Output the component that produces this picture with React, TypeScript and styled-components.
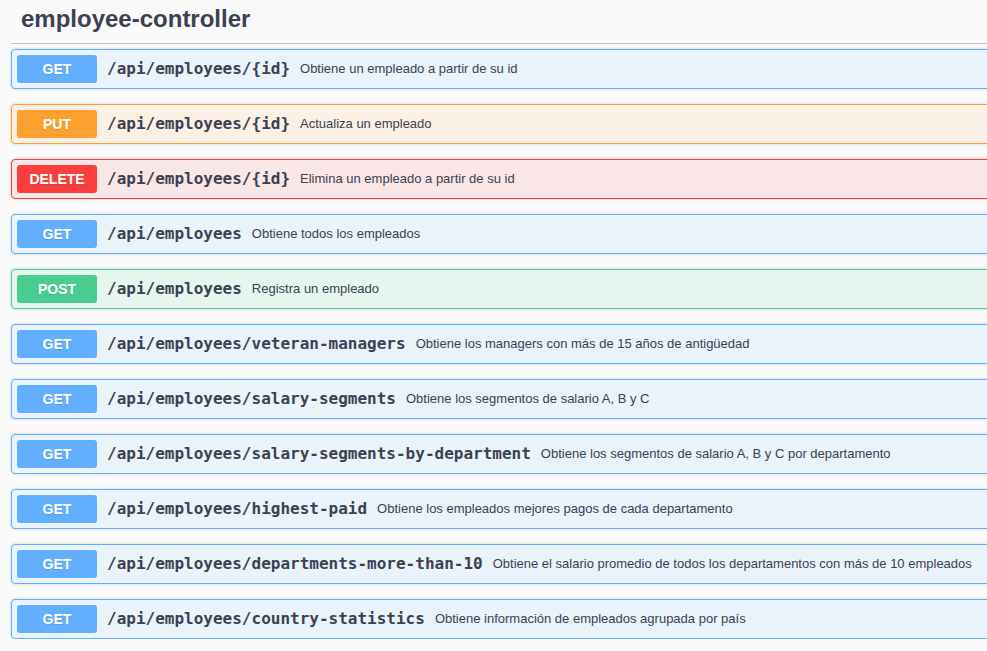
import React from 'react';
import styled, { createGlobalStyle } from 'styled-components';

type Method = 'GET' | 'PUT' | 'DELETE' | 'POST';

const methodColors: Record<Method, { main: string; bg: string }> = {
  GET: { main: '#61affe', bg: 'rgba(97, 175, 254, 0.1)' },
  PUT: { main: '#fca130', bg: 'rgba(252, 161, 48, 0.1)' },
  DELETE: { main: '#f93e3e', bg: 'rgba(249, 62, 62, 0.1)' },
  POST: { main: '#49cc90', bg: 'rgba(73, 204, 144, 0.1)' },
};

const operations: { method: Method; path: string; summary: string }[] = [
  { method: 'GET', path: '/api/employees/{id}', summary: 'Obtiene un empleado a partir de su id' },
  { method: 'PUT', path: '/api/employees/{id}', summary: 'Actualiza un empleado' },
  { method: 'DELETE', path: '/api/employees/{id}', summary: 'Elimina un empleado a partir de su id' },
  { method: 'GET', path: '/api/employees', summary: 'Obtiene todos los empleados' },
  { method: 'POST', path: '/api/employees', summary: 'Registra un empleado' },
  {
    method: 'GET',
    path: '/api/employees/veteran-managers',
    summary: 'Obtiene los managers con más de 15 años de antigüedad',
  },
  {
    method: 'GET',
    path: '/api/employees/salary-segments',
    summary: 'Obtiene los segmentos de salario A, B y C',
  },
  {
    method: 'GET',
    path: '/api/employees/salary-segments-by-department',
    summary: 'Obtiene los segmentos de salario A, B y C por departamento',
  },
  {
    method: 'GET',
    path: '/api/employees/highest-paid',
    summary: 'Obtiene los empleados mejores pagos de cada departamento',
  },
  {
    method: 'GET',
    path: '/api/employees/departments-more-than-10',
    summary: 'Obtiene el salario promedio de todos los departamentos con más de 10 empleados',
  },
  {
    method: 'GET',
    path: '/api/employees/country-statistics',
    summary: 'Obtiene información de empleados agrupada por país',
  },
];

const App = () => {
  return (
    <>
      <GlobalStyle />
      <Page>
        <TagHeading>employee-controller</TagHeading>
        <OpList>
          {operations.map((op, i) => (
            <OpBlock key={i} method={op.method}>
              <MethodBadge method={op.method}>{op.method}</MethodBadge>
              <OpPath>{op.path}</OpPath>
              <OpSummary>{op.summary}</OpSummary>
            </OpBlock>
          ))}
        </OpList>
      </Page>
    </>
  );
};

export default App;

const GlobalStyle = createGlobalStyle`
  html, body {
    margin: 0;
    padding: 0;
    background: #fafafa;
    overflow: hidden;
  }
  body {
    font-family: 'Liberation Sans', Arial, sans-serif;
    color: #3b4151;
  }
`;

const Page = styled.div`
  width: 1020px;
  padding-left: 11px;
`;

const TagHeading = styled.h3`
  margin: 0 0 5px;
  padding: 5px 0 10px 10px;
  font-size: 24px;
  line-height: 28px;
  font-weight: 700;
  color: #3b4151;
  border-bottom: 1px solid rgba(59, 65, 81, 0.3);
`;

const OpList = styled.div`
  display: flex;
  flex-direction: column;
  gap: 15px;
`;

const OpBlock = styled.div<{ method: Method }>`
  display: flex;
  align-items: center;
  height: 40px;
  box-sizing: border-box;
  padding: 5px;
  border: 1px solid ${({ method }) => methodColors[method].main};
  border-radius: 4px;
  background: ${({ method }) => methodColors[method].bg};
  box-shadow: 0 0 3px rgba(0, 0, 0, 0.19);
`;

const MethodBadge = styled.span<{ method: Method }>`
  flex: 0 0 auto;
  width: 80px;
  height: 28px;
  padding-bottom: 1px;
  box-sizing: border-box;
  display: flex;
  align-items: center;
  justify-content: center;
  border-radius: 3px;
  background: ${({ method }) => methodColors[method].main};
  color: #fff;
  font-size: 14px;
  font-weight: 700;
  text-shadow: 0 1px 0 rgba(0, 0, 0, 0.1);
`;

const OpPath = styled.span`
  padding: 0 10px 2px;
  font-family: 'DejaVu Sans Mono', monospace;
  font-size: 16px;
  font-weight: 700;
  color: #3b4151;
  white-space: nowrap;
`;

const OpSummary = styled.span`
  padding-bottom: 2px;
  font-size: 13px;
  color: #3b4151;
  white-space: nowrap;
`;
